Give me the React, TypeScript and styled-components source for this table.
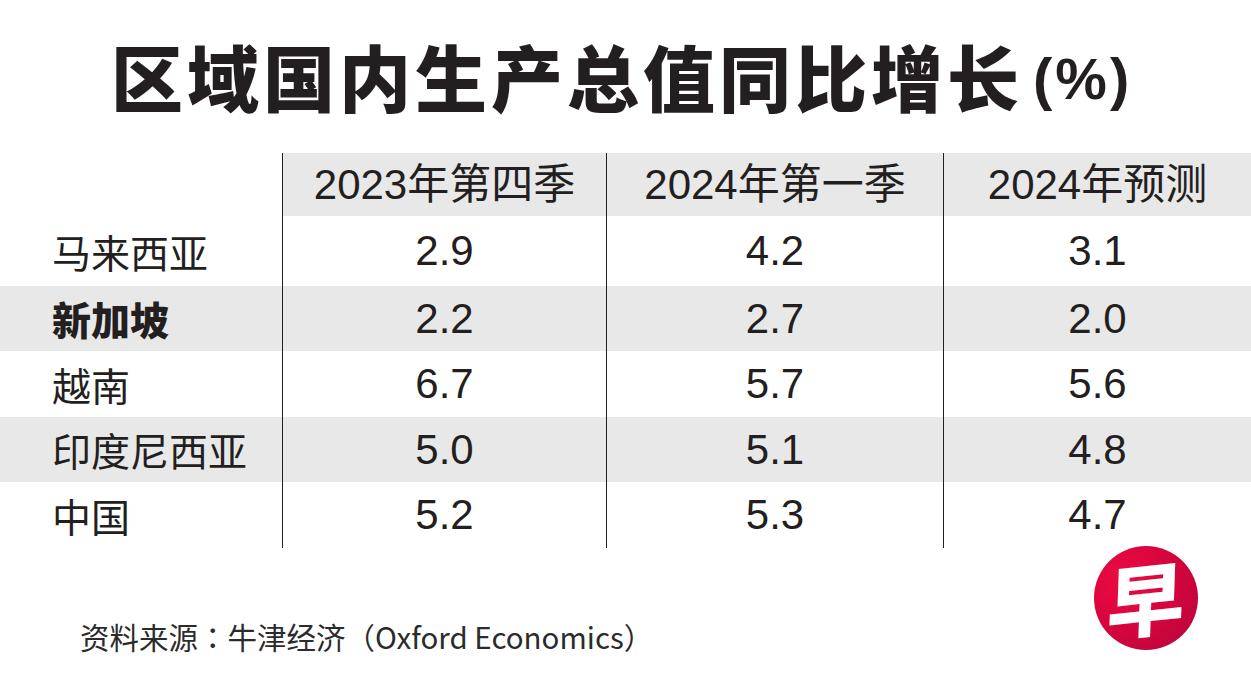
import React from "react";
import styled, { createGlobalStyle } from "styled-components";

const GlobalStyle = createGlobalStyle`
	html, body {
		margin: 0;
		padding: 0;
		background: #ffffff;
	}
	body {
		font-family: "Noto Sans CJK SC", "Liberation Sans", sans-serif;
		color: #231f20;
		width: 1251px;
		height: 700px;
		overflow: hidden;
	}
`;

const Page = styled.main`
	display: flex;
	flex-direction: column;
	width: 1251px;
	height: 700px;
`;

const Title = styled.h1`
	margin: 39px 0 0 111px;
	display: flex;
	align-items: center;
	font-family: "Noto Sans CJK SC", sans-serif;
	font-weight: 900;
	font-size: 72px;
	line-height: 1;
	letter-spacing: 4px;
	color: #231f20;
`;

const Unit = styled.span`
	margin-left: 10px;
	font-family: "Liberation Sans", sans-serif;
	font-weight: 700;
	font-size: 58px;
	letter-spacing: 3px;
	line-height: 1;
	transform: translateY(4px);
`;

const Table = styled.section`
	margin-top: 42px;
	display: flex;
	flex-direction: column;
`;

const Row = styled.div<{ $shade?: boolean; $height: number }>`
	display: grid;
	grid-template-columns: 282px 324px 337px 1fr;
	height: ${(p) => p.$height}px;
	background: ${(p) => (p.$shade ? "#e8e8e9" : "transparent")};
`;

const Corner = styled.div`
	background: #ffffff;
`;

const Cell = styled.div<{ $head?: boolean }>`
	display: flex;
	align-items: center;
	justify-content: center;
	border-left: 1.5px solid #231f20;
	background: ${(p) => (p.$head ? "#e8e8e9" : "transparent")};
	font-family: "Liberation Sans", "Noto Sans CJK SC", sans-serif;
	font-size: 42px;
	line-height: 1;
	color: #231f20;
	white-space: nowrap;
`;

const Label = styled.div<{ $bold?: boolean }>`
	display: flex;
	align-items: center;
	padding-left: 52px;
	font-family: "Noto Sans CJK SC", sans-serif;
	font-size: 39px;
	font-weight: ${(p) => (p.$bold ? 900 : 400)};
	line-height: 1;
	color: #231f20;
`;

const Footer = styled.footer`
	display: flex;
	justify-content: space-between;
	align-items: flex-start;
	margin-top: -2px;
	padding-right: 53px;
`;

const Source = styled.p`
	margin: 76px 0 0 80px;
	font-family: "Noto Sans CJK SC", sans-serif;
	font-size: 29.5px;
	line-height: 1;
	color: #2b2b2b;
`;

const Colon = styled.span`
	font-family: "Noto Sans CJK TC", "Noto Sans CJK SC", sans-serif;
`;

const Logo = styled.div`
	width: 104px;
	height: 104px;
	border-radius: 50%;
	background: radial-gradient(circle at 28% 32%, #ec0b42 0%, #d5053d 50%, #b1063a 100%);
	display: flex;
	align-items: center;
	justify-content: center;
	color: #ffffff;
	font-family: "Noto Sans CJK SC", sans-serif;
	font-weight: 900;
	font-size: 78px;
	line-height: 1;
	span {
		display: block;
		transform: rotate(-6deg) skewX(-8deg) translateY(-2px);
	}
`;

type Entry = { name: string; bold?: boolean; values: string[] };

const heads = ["2023年第四季", "2024年第一季", "2024年预测"];

const rows: Entry[] = [
	{ name: "马来西亚", values: ["2.9", "4.2", "3.1"] },
	{ name: "新加坡", bold: true, values: ["2.2", "2.7", "2.0"] },
	{ name: "越南", values: ["6.7", "5.7", "5.6"] },
	{ name: "印度尼西亚", values: ["5.0", "5.1", "4.8"] },
	{ name: "中国", values: ["5.2", "5.3", "4.7"] },
];

const heights = [70, 65, 66, 65, 66];

const App = () => {
	return (
		<>
			<GlobalStyle />
			<Page>
				<Title>
					区域国内生产总值同比增长<Unit>(%)</Unit>
				</Title>
				<Table>
					<Row $height={63}>
						<Corner />
						{heads.map((h) => (
							<Cell key={h} $head>
								{h}
							</Cell>
						))}
					</Row>
					{rows.map((r, i) => (
						<Row key={r.name} $height={heights[i]} $shade={i % 2 === 1}>
							<Label $bold={r.bold}>{r.name}</Label>
							{r.values.map((v, j) => (
								<Cell key={j}>{v}</Cell>
							))}
						</Row>
					))}
				</Table>
				<Footer>
					<Source>
						资料来源<Colon>：</Colon>牛津经济（Oxford Economics）
					</Source>
					<Logo>
						<span>早</span>
					</Logo>
				</Footer>
			</Page>
		</>
	);
};

export default App;
